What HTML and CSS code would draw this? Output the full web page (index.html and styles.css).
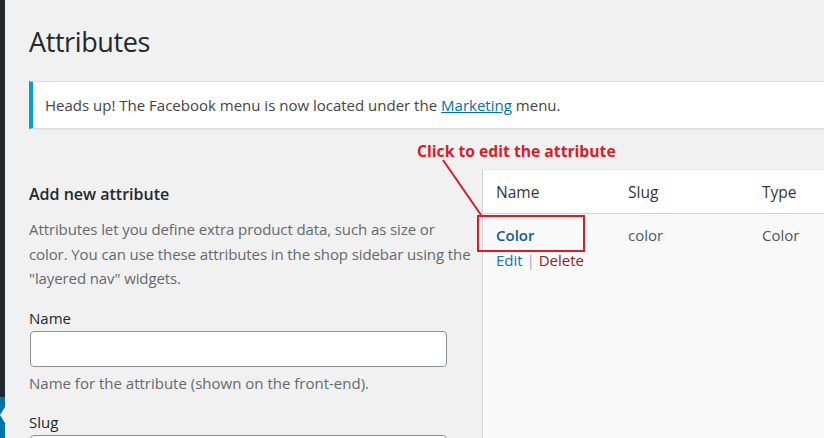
FILE: index.html
```html
<!DOCTYPE html>
<html>
<head>
<meta charset="utf-8">
<link rel="stylesheet" href="styles.css">
</head>
<body>
<div class="page">
  <div class="sidebar">
    <div class="menu-current"><span class="notch"></span></div>
  </div>
  <main class="main">
    <h1 class="title">Attributes</h1>
    <div class="notice">Heads up! The Facebook menu is now located under the <a href="#" class="notice-link">Marketing</a> menu.</div>
    <div class="cols">
      <section class="col-left">
        <h2 class="form-title">Add new attribute</h2>
        <p class="intro">Attributes let you define extra product data, such as size or color. You can use these attributes in the shop sidebar using the "layered nav" widgets.</p>
        <div class="field">
          <label class="field-label">Name</label>
          <div class="input"></div>
          <p class="help">Name for the attribute (shown on the front-end).</p>
        </div>
        <div class="field">
          <label class="field-label">Slug</label>
          <div class="input"></div>
        </div>
      </section>
      <section class="col-right">
        <div class="table">
          <div class="row head">
            <div class="cell c1">Name</div>
            <div class="cell c2">Slug</div>
            <div class="cell c3">Type</div>
          </div>
          <div class="row body">
            <div class="cell c1">
              <a href="#" class="row-title">Color</a>
              <div class="row-actions"><a href="#" class="edit">Edit</a> <span class="sep">|</span> <a href="#" class="delete">Delete</a></div>
            </div>
            <div class="cell c2">color</div>
            <div class="cell c3">Color</div>
          </div>
        </div>
      </section>
    </div>
  </main>
  <div class="callout-text">Click to edit the attribute</div>
  <svg class="callout-line" width="824" height="438" viewBox="0 0 824 438">
    <line x1="443" y1="160" x2="481" y2="215" stroke="#d91c26" stroke-width="2"/>
  </svg>
  <div class="callout-box"></div>
</div>
</body>
</html>
```

FILE: styles.css
```css
* { box-sizing: border-box; }
html, body { margin: 0; padding: 0; }
body {
  width: 824px;
  height: 438px;
  overflow: hidden;
  background: #f1f1f1;
  font-family: "Open Sans", "Noto Sans", sans-serif;
  color: #3c434a;
}
.page {
  position: relative;
  display: flex;
  width: 824px;
  height: 438px;
  overflow: hidden;
}
.sidebar {
  width: 5px;
  flex: 0 0 5px;
  background: #23282d;
  display: flex;
  flex-direction: column;
  justify-content: flex-end;
}
.menu-current {
  position: relative;
  height: 41px;
  background: #0073aa;
}
.notch {
  position: absolute;
  right: 0;
  top: 10px;
  width: 0;
  height: 0;
  border-top: 8px solid transparent;
  border-bottom: 8px solid transparent;
  border-right: 5px solid #f1f1f1;
}
.main {
  flex: 1;
  padding-left: 24px;
  min-width: 0;
  display: flex;
  flex-direction: column;
  overflow: hidden;
}
.title {
  margin: 22px 0 0;
  font-size: 27px;
  font-weight: 400;
  line-height: 40px;
  color: #23282d;
  letter-spacing: -0.4px;
}
.notice {
  margin-top: 19px;
  height: 48px;
  flex: 0 0 48px;
  background: #fff;
  border: 1px solid #dcdcde;
  border-left: 4px solid #00a0d2;
  border-right: none;
  box-shadow: 0 1px 1px rgba(0,0,0,0.04);
  padding: 0 0 0 12px;
  display: flex;
  align-items: center;
  font-size: 15px;
  color: #444;
  white-space: nowrap;
}
.notice-link { color: #0073aa; text-decoration: underline; margin: 0 4px; }
.cols {
  display: flex;
  gap: 9px;
  margin-top: 40px;
  flex: 1;
  min-height: 0;
}
.col-left {
  width: 444px;
  flex: 0 0 444px;
  padding-top: 13px;
}
.form-title {
  margin: 0;
  font-size: 16px;
  font-weight: 600;
  color: #23282d;
  line-height: 24px;
}
.intro {
  margin: 11px 0 0;
  font-size: 15px;
  line-height: 24.5px;
  color: #646970;
  letter-spacing: -0.1px;
}
.field { margin-top: 15px; }
.field + .field { margin-top: 15px; }
.field-label {
  display: block;
  font-size: 15px;
  line-height: 24px;
  color: #23282d;
}
.input {
  margin-top: 1px;
  width: 417px;
  height: 36px;
  background: #fff;
  border: 1px solid #8c8f94;
  border-radius: 4px;
  margin-left: 1px;
}
.help {
  margin: 4px 0 0;
  font-size: 15px;
  line-height: 24px;
  color: #646970;
  white-space: nowrap;
}
.col-right {
  flex: 1;
  min-width: 0;
  display: flex;
}
.table {
  flex: 1;
  background: #f9f9f9;
  border-left: 1px solid #d4d4d4;
  border-top: 1px solid #e2e4e7;
}
.row { display: flex; }
.head {
  background: #fff;
  height: 44px;
  border-bottom: 1px solid #d4d6d9;
  align-items: center;
}
.cell {
  font-size: 15.5px;
  color: #32373c;
  padding-left: 13px;
}
.c1 { width: 132px; }
.c2 { width: 134px; }
.c3 { width: 120px; }
.body .cell { padding-top: 9px; color: #50575e; font-size: 15px; line-height: 24px; }
.row-title {
  color: #135e96;
  font-weight: 600;
  text-decoration: none;
}
.row-actions { line-height: 24px; margin-top: 1px; font-size: 15px; }
.edit { color: #2271b1; text-decoration: none; }
.sep { color: #a7aaad; }
.delete { color: #8a2424; text-decoration: none; }
.callout-text {
  position: absolute;
  left: 417px;
  top: 140px;
  font-size: 15.7px;
  font-weight: 700;
  color: #d91c26;
  white-space: nowrap;
}
.callout-line {
  position: absolute;
  left: 0;
  top: 0;
  pointer-events: none;
}
.callout-box {
  position: absolute;
  left: 477px;
  top: 215px;
  width: 108px;
  height: 37px;
  border: 2px solid #d91c26;
}
```
